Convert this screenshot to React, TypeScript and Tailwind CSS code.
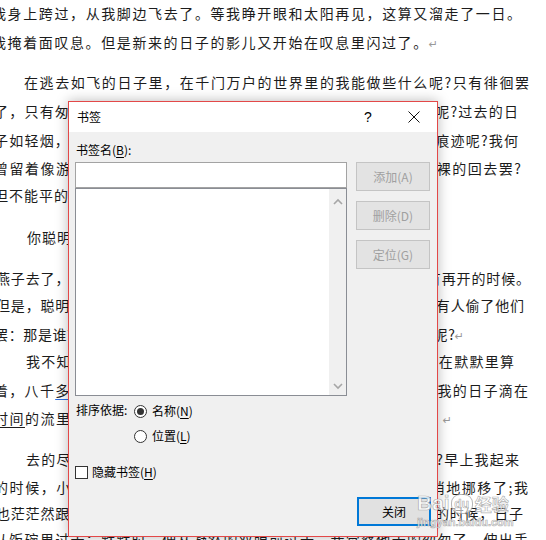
import React from "react";

const CJK = "[font-family:'Noto_Sans_CJK_SC','Noto_Sans_CJK_JP',sans-serif]";

function Mark() {
  return (
    <span className="text-[#9a9a9a] text-[11px] [font-family:'DejaVu_Sans',sans-serif]">↵</span>
  );
}

type L = { cls: string; j: boolean; t: React.ReactNode };

const lines: L[] = [
  { cls: "ml-[-8px] w-[529px] h-[29px]", j: true, t: "我身上跨过，从我脚边飞去了。等我睁开眼和太阳再见，这算又溜走了一日。" },
  { cls: "ml-[-8px] w-[446px] h-[40px]", j: true, t: <>我掩着面叹息。但是新来的日子的影儿又开始在叹息里闪过了。<Mark /></> },
  { cls: "ml-[24px] w-[505px] h-[29px]", j: true, t: "在逃去如飞的日子里，在千门万户的世界里的我能做些什么呢?只有徘徊罢" },
  { cls: "ml-[-6px] w-[524px] h-[29px]", j: true, t: "了，只有匆匆罢了；在八千多日的匆匆里，除徘徊外，又剩些什么呢?过去的日" },
  { cls: "ml-[-6px] w-[524px] h-[28px]", j: true, t: "子如轻烟，被微风吹散了，如薄雾，被初阳蒸融了；我留着些什么痕迹呢?我何" },
  { cls: "ml-[-6px] w-[527px] h-[27px]", j: true, t: "曾留着像游丝样的痕迹呢?我赤裸裸来到这世界，转眼间也将赤裸裸的回去罢?" },
  { cls: "ml-[-6px] w-[480px] h-[42px] tracking-[1px]", j: false, t: <>但不能平的，为什么偏要白白走这一遭啊?<Mark /></> },
  { cls: "ml-[27px] w-[480px] h-[41px] tracking-[1px]", j: false, t: <>你聪明的，告诉我，我们的日子为什么一去不复返呢?<Mark /></> },
  { cls: "ml-[-4px] w-[534px] h-[27px]", j: true, t: "燕子去了，有再来的时候；杨柳枯了，有再青的时候；桃花谢了，有再开的时候。" },
  { cls: "ml-[-4px] w-[528px] h-[29px]", j: true, t: "但是，聪明的，你告诉我，我们的日子为什么一去不复返呢？——是有人偷了他们" },
  { cls: "ml-[-6px] w-[470px] h-[27px]", j: true, t: <>罢：那是谁？又藏在何处呢？是他们自己逃走了罢：现在又到了哪里呢?<Mark /></> },
  { cls: "ml-[26px] w-[488px] h-[29px]", j: true, t: "我不知道他们给了我多少日子；但我的手确乎是渐渐空虚了。在默默里算" },
  {
    cls: "ml-[-6px] w-[534px] h-[28px]",
    j: true,
    t: (
      <>
        着，八千<span className="underline decoration-[#2f6fe0] underline-offset-[3px]">多</span>日子已经从我手中溜去；像针尖上一滴水滴在大海里，我的日子滴在
      </>
    ),
  },
  {
    cls: "ml-[-6px] w-[458px] h-[41px]",
    j: true,
    t: (
      <>
        <span className="underline underline-offset-[3px]">时间</span>的流里，没有声音，也没有影子。我不禁头涔涔而泪潸潸了。<Mark />
      </>
    ),
  },
  { cls: "ml-[26px] w-[493px] h-[28px]", j: true, t: "去的尽管去了，来的尽管来着；去来的中间，又怎样地匆匆呢?早上我起来" },
  { cls: "ml-[-6px] w-[534px] h-[26px]", j: true, t: "的时候，小屋里射进两三方斜斜的太阳。太阳他有脚啊，轻轻悄悄地挪移了;我" },
  { cls: "ml-[-4px] w-[527px] h-[26px]", j: true, t: "也茫茫然跟着旋转。于是——洗手的时候，日子从水盆里过去；吃饭的时候，日子" },
  { cls: "ml-[-6px] w-[534px] h-[24px]", j: true, t: "从饭碗里过去；默默时，便从凝然的双眼前过去。我觉察他去的匆匆了，伸出手" },
];

function Chevron({ up }: { up: boolean }) {
  return (
    <svg width="10" height="7" viewBox="0 0 10 7">
      <path
        d={up ? "M1 6 L5 2 L9 6" : "M1 1 L5 5 L9 1"}
        fill="none"
        stroke="#a6a6a6"
        strokeWidth="1.6"
      />
    </svg>
  );
}

function DisabledButton({ children }: { children: React.ReactNode }) {
  return (
    <div className="h-[29px] w-[74px] flex items-center justify-center bg-[#e3e3e3] border border-[#c4c4c4] text-[#a0a0a0]">
      {children}
    </div>
  );
}

function Dialog() {
  return (
    <div
      className={`absolute left-[68px] top-[101px] w-[370px] h-[436px] border border-[#e34848] bg-[#f0f0f0] shadow-[0_0_12px_rgba(0,0,0,0.28)] flex flex-col text-[12px] text-black ${CJK}`}
    >
      <div className="h-[30px] bg-white flex items-center">
        <div className="flex-1 pl-[8px] leading-[16px]">书签</div>
        <div className="w-[46px] h-full flex items-center justify-center text-[14px] [font-family:'Liberation_Sans',sans-serif]">?</div>
        <div className="w-[46px] h-full flex items-center justify-center">
          <svg width="12" height="12" viewBox="0 0 12 12">
            <path d="M0.5 0.5 L11.5 11.5 M11.5 0.5 L0.5 11.5" stroke="#111" strokeWidth="1" />
          </svg>
        </div>
      </div>
      <div className="flex-1 px-[6px] pt-[10px] flex flex-col">
        <div className="h-[16px] leading-[16px] pl-[1px]">
          书签名(<span className="underline underline-offset-[2px]">B</span>):
        </div>
        <div className="mt-[4px] flex gap-[9px]">
          <div className="w-[272px] flex flex-col">
            <div className="h-[26px] bg-white border border-[#a3a3a3]" />
            <div className="h-[208px] bg-white border border-[#8a8d94] flex">
              <div className="flex-1" />
              <div className="w-[17px] bg-[#f0f0f0] flex flex-col justify-between">
                <div className="h-[19px] flex items-end justify-center pb-[3px]">
                  <Chevron up />
                </div>
                <div className="h-[17px] flex items-center justify-center">
                  <Chevron up={false} />
                </div>
              </div>
            </div>
          </div>
          <div className="w-[74px] flex flex-col gap-[10px]">
            <DisabledButton>添加(A)</DisabledButton>
            <DisabledButton>删除(D)</DisabledButton>
            <DisabledButton>定位(G)</DisabledButton>
          </div>
        </div>
        <div className="mt-[5px] h-[20px] flex items-center">
          <div className="w-[59px] pl-[1px] leading-[16px] self-start pt-[1px]">排序依据:</div>
          <div className="w-[13px] h-[13px] rounded-full border border-[#333] bg-white flex items-center justify-center">
            <div className="w-[7px] h-[7px] rounded-full bg-[#333]" />
          </div>
          <div className="ml-[5px] leading-[16px]">
            名称(<span className="underline underline-offset-[2px]">N</span>)
          </div>
        </div>
        <div className="mt-[5px] h-[20px] flex items-center pl-[59px]">
          <div className="w-[13px] h-[13px] rounded-full border border-[#333] bg-white" />
          <div className="ml-[5px] leading-[16px]">
            位置(<span className="underline underline-offset-[2px]">L</span>)
          </div>
        </div>
        <div className="mt-[16px] h-[20px] flex items-center">
          <div className="w-[13px] h-[13px] border border-[#333] bg-white" />
          <div className="ml-[4px] leading-[16px]">
            隐藏书签(<span className="underline underline-offset-[2px]">H</span>)
          </div>
        </div>
        <div className="mt-[15px] flex justify-end">
          <div className="h-[29px] w-[74px] flex items-center justify-center bg-[#e1e1e1] border-2 border-[#0078d7]">
            关闭
          </div>
        </div>
      </div>
    </div>
  );
}

function Watermark() {
  return (
    <div className="absolute left-[417px] top-[492px] flex flex-col text-white/80 [-webkit-text-stroke:0.7px_rgba(110,110,110,0.55)] pointer-events-none">
      <div className="flex items-end h-[22px]">
        <span className="text-[21px] font-bold leading-[22px] [font-family:'Liberation_Sans',sans-serif]">Bai</span>
        <span className="ml-[1px] w-[22px] h-[20px] rounded-[9px] border border-[rgba(110,110,110,0.5)] bg-white/60 flex items-center justify-center text-[12px] font-bold leading-[12px] [font-family:'Liberation_Sans',sans-serif]">
          du
        </span>
        <span className={`ml-[2px] text-[17px] font-bold leading-[20px] ${CJK}`}>经验</span>
      </div>
      <div className="text-[11px] font-bold leading-[14px] mt-[1px] [font-family:'Liberation_Sans',sans-serif]">
        jingyan.baidu.com
      </div>
    </div>
  );
}

export default function App() {
  return (
    <div className="relative w-[546px] h-[540px] overflow-hidden bg-white">
      <div className={`pt-[1px] text-[14px] text-[#1c1c1c] ${CJK}`}>
        {lines.map((l, i) => (
          <div
            key={i}
            className={`${l.cls} leading-[24px] ${l.j ? "text-justify [text-align-last:justify]" : ""}`}
          >
            {l.t}
          </div>
        ))}
      </div>
      <Dialog />
      <Watermark />
    </div>
  );
}
